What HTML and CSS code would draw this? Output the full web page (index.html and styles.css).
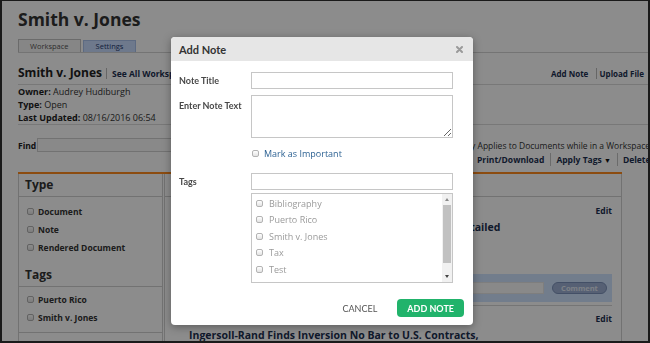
FILE: index.html
```html
<!DOCTYPE html>
<html lang="en">
<head>
  <meta charset="UTF-8">
  <title>Smith v. Jones - Workspace</title>
  <link rel="stylesheet" href="styles.css">
</head>
<body>

  <div class="page">
    <h1 class="case-title">Smith v. Jones</h1>

    <div class="tabs">
      <span class="tab active">Workspace</span>
      <span class="tab settings">Settings</span>
    </div>

    <div class="ws-head">
      <div class="ws-name">
        <h2>Smith v. Jones</h2>
        <a class="ws-link">See All Workspaces</a>
      </div>
      <div class="ws-actions">
        <a>Add Note</a>
        <a>Upload File</a>
      </div>
    </div>

    <div class="meta">
      <div><b>Owner:</b> Audrey Hudiburgh</div>
      <div><b>Type:</b> Open</div>
      <div><b>Last Updated:</b> 08/16/2016 06:54</div>
    </div>

    <div class="find-row">
      <label>Find</label>
      <input type="text" class="find">
      <span class="find-note">Only Applies to Documents while in a Workspace</span>
    </div>

    <div class="toolbar">
      <a>Print/Download</a>
      <a>Apply Tags <span class="caret">&#9660;</span></a>
      <a>Delete</a>
    </div>

    <div class="panels">
      <aside class="filters">
        <div class="filter-box">
          <div class="filter-head">Type</div>
          <div class="filter-list">
            <label><input type="checkbox"> Document</label>
            <label><input type="checkbox"> Note</label>
            <label><input type="checkbox"> Rendered Document</label>
          </div>
          <div class="filter-head">Tags</div>
          <div class="filter-list last">
            <label><input type="checkbox"> Puerto Rico</label>
            <label><input type="checkbox"> Smith v. Jones</label>
          </div>
        </div>
      </aside>

      <main class="docs">
        <div class="docs-head"></div>

        <div class="doc">
          <div class="doc-edit"><a>Edit</a></div>
          <div class="doc-title">Treasury Anti-Inversion Regulations Explained and Detailed</div>
          <div class="comment-bar">
            <input type="text" class="comment-input">
            <button class="comment-btn">Comment</button>
          </div>
        </div>

        <div class="doc">
          <div class="doc-edit"><a>Edit</a></div>
          <div class="doc-title">Ingersoll-Rand Finds Inversion No Bar to U.S. Contracts, Agency Says</div>
        </div>
      </main>
    </div>
  </div>

  <div class="overlay"></div>

  <div class="modal">
    <div class="modal-head">
      <h3>Add Note</h3>
      <svg class="close" width="7" height="7" viewBox="0 0 7 7">
        <path d="M1 1L6 6M6 1L1 6" stroke="#9a9a9a" stroke-width="2" stroke-linecap="round"/>
      </svg>
    </div>

    <div class="modal-body">
      <div class="row row-title">
        <label>Note Title</label>
        <input type="text" class="field">
      </div>
      <div class="row row-text">
        <label>Enter Note Text</label>
        <textarea class="field area"></textarea>
      </div>
      <div class="row row-check">
        <label></label>
        <div class="important">
          <input type="checkbox" class="box">
          <span>Mark as Important</span>
        </div>
      </div>
      <div class="row row-tags">
        <label>Tags</label>
        <input type="text" class="field">
      </div>
      <div class="row row-list">
        <label></label>
        <div class="tag-list">
          <div class="tag-items">
            <div class="tag"><input type="checkbox" class="box"> Bibliography</div>
            <div class="tag"><input type="checkbox" class="box"> Puerto Rico</div>
            <div class="tag"><input type="checkbox" class="box"> Smith v. Jones</div>
            <div class="tag"><input type="checkbox" class="box"> Tax</div>
            <div class="tag"><input type="checkbox" class="box"> Test</div>
            <div class="tag"><input type="checkbox" class="box"> Transfer Pricing</div>
          </div>
          <div class="scrollbar">
            <div class="sb-up"></div>
            <div class="sb-thumb"></div>
            <div class="sb-space"></div>
            <div class="sb-down"></div>
          </div>
        </div>
      </div>
    </div>

    <div class="modal-foot">
      <a class="cancel">CANCEL</a>
      <button class="add-note">ADD NOTE</button>
    </div>
  </div>

</body>
</html>
```

FILE: styles.css
```css
* { box-sizing: border-box; }
html, body {
  margin: 0;
  height: 100%;
  overflow: hidden;
}
body {
  font-family: "Open Sans", sans-serif;
  background-color: #fff;
  color: #222;
}
a { color: #1d3050; }

/* page behind the dialog */
.page {
  width: 650px;
  padding: 8px 0 0 18px;
}
.case-title {
  margin: 0;
  font-size: 17.5px;
  line-height: 22px;
  font-weight: 700;
  color: #333;
}
.tabs {
  display: flex;
  align-items: flex-end;
  gap: 2px;
  margin-top: 9px;
  border-bottom: 1px solid #d4d4d4;
}
.tab {
  height: 13px;
  padding: 0 11px;
  font-size: 7.5px;
  line-height: 12px;
  color: #555;
  background-color: #f4f4f4;
  border: 1px solid #c4c4c4;
  border-bottom: none;
}
.tab.settings {
  height: 12px;
  padding: 0 12px;
  line-height: 11px;
  color: #1f3a6e;
  background-color: #c9dcff;
  border-color: #a9c1ec;
}
.ws-head {
  display: flex;
  justify-content: space-between;
  align-items: baseline;
  height: 32px;
  padding: 7px 6px 0 0;
  border-bottom: 1px solid #dadada;
}
.ws-name {
  display: flex;
  align-items: baseline;
}
.ws-name h2 {
  margin: 0;
  font-size: 12px;
  line-height: 16px;
  font-weight: 700;
}
.ws-link {
  margin-left: 4px;
  padding-left: 5px;
  border-left: 1px solid #bbb;
  font-size: 8.5px;
  font-weight: 700;
}
.ws-actions a {
  font-size: 8px;
  font-weight: 700;
  padding: 0 3px;
}
.ws-actions a + a {
  border-left: 1px solid #bbb;
  padding-right: 0;
}
.meta {
  font-size: 9px;
  line-height: 13px;
  color: #333;
  border-bottom: 1px solid #dadada;
}
.meta b { color: #222; }
.find-row {
  display: flex;
  align-items: center;
  padding-top: 13px;
  white-space: nowrap;
}
.find-row label {
  width: 20px;
  font-size: 8.5px;
  font-weight: 700;
}
.find {
  width: 422px;
  height: 14px;
  margin-right: 10px;
  border: 1px solid #cfcfcf;
  background-color: #fafafa;
}
.find-note {
  font-size: 8.5px;
  color: #333;
}
.toolbar {
  display: flex;
  height: 13px;
  margin-top: 1px;
  padding-left: 459px;
  white-space: nowrap;
  font-size: 8.5px;
  line-height: 13px;
  font-weight: 700;
}
.toolbar a + a {
  margin-left: 6px;
  padding-left: 5px;
  border-left: 1px solid #c4c4c4;
}
.caret {
  font-size: 7px;
  color: #111;
}

.panels {
  display: flex;
  width: 604px;
  height: 220px;
  margin-top: 6px;
  border-top: 2px solid #ff8a1e;
}
.filters {
  width: 145px;
  border-left: 1px solid #cfcfcf;
  border-right: 1px solid #cfcfcf;
}
.filter-box { border-bottom: 1px solid #cfcfcf; }
.filter-head {
  height: 23px;
  padding-left: 6px;
  font-size: 12px;
  line-height: 22px;
  font-weight: 700;
  color: #333;
  border-bottom: 1px solid #cfcfcf;
}
.filter-list { padding: 5px 0 8px 8px; }
.filter-list.last { padding: 3px 0 6px 8px; }
.filter-list label {
  display: flex;
  align-items: center;
  gap: 4px;
  height: 18px;
  font-size: 8.5px;
  font-weight: 700;
  color: #333;
}
.filter-list input,
.box {
  appearance: none;
  width: 7px;
  height: 7px;
  margin: 0;
  border: 1px solid #b3b3b3;
  border-radius: 2px;
  background: linear-gradient(#fff, #e3e3e3);
}
.docs {
  flex: 1;
  margin-left: 1px;
  border-left: 1px solid #cfcfcf;
  border-right: 1px solid #cfcfcf;
}
.docs-head {
  height: 23px;
  border-bottom: 1px solid #cfcfcf;
}
.doc {
  margin: 0 9px 0 24px;
  border-bottom: 1px solid #d6d6d6;
}
.doc-edit {
  margin-top: 7px;
  text-align: right;
  font-size: 8.5px;
  line-height: 14px;
  font-weight: 700;
}
.doc + .doc .doc-edit { margin-top: 6px; }
.doc-title {
  max-width: 312px;
  margin-top: 2px;
  font-size: 10.5px;
  line-height: 14px;
  font-weight: 700;
  color: #1d3050;
}
.comment-bar {
  display: flex;
  gap: 8px;
  margin: 40px 0 3px -14px;
  padding: 8px 5px;
  background-color: #d0e3ff;
}
.comment-input {
  flex: 1;
  height: 12px;
  border: 1px solid #e6e6e6;
  background-color: #fafafa;
}
.comment-btn {
  width: 55px;
  height: 12px;
  padding: 0;
  border: 1px solid #7b91ba;
  border-radius: 7px;
  background-color: #9db0d3;
  color: #e4eaf5;
  font-family: "Open Sans", sans-serif;
  font-size: 7.5px;
  font-weight: 700;
}

/* dim layer */
.overlay {
  position: fixed;
  inset: 0;
  background-color: rgba(0, 0, 0, 0.45);
  border-style: solid;
  border-color: #1a1a1a;
  border-width: 1px 2px 2px 2px;
}

/* dialog */
.modal {
  position: absolute;
  left: 171px;
  top: 37px;
  width: 302px;
  background-color: #fff;
  border-radius: 4px;
  box-shadow: 0 2px 8px rgba(0, 0, 0, 0.35);
  font-family: Lato, sans-serif;
}
.modal-head {
  display: flex;
  justify-content: space-between;
  align-items: center;
  height: 24px;
  padding: 0 10px 0 8px;
  background-color: #e6e6e6;
  border-radius: 4px 4px 0 0;
}
.modal-head h3 {
  margin: 0;
  font-size: 11px;
  font-weight: 700;
  color: #333;
}
.modal-body { padding: 11px 20px 0 8px; }
.row { display: flex; }
.row label {
  width: 72px;
  flex: none;
  font-size: 9px;
  font-weight: 700;
  color: #484848;
}
.row-title label,
.row-tags label { align-self: center; }
.row-text { margin-top: 6px; }
.row-text label { padding-top: 5px; }
.row-check { margin-top: 8px; }
.row-tags { margin-top: 13px; }
.row-list { margin-top: 3px; }
.field {
  width: 202px;
  height: 17px;
  border: 1px solid #c6c6c6;
  font-family: Lato, sans-serif;
}
.field.area {
  height: 43px;
  display: block;
}
.important {
  display: flex;
  align-items: center;
  gap: 5px;
  height: 14px;
  padding-left: 1px;
  font-family: "Open Sans", sans-serif;
  font-size: 9px;
  color: #2d6293;
}
.tag-list {
  display: flex;
  width: 202px;
  height: 90px;
  border: 1px solid #c6c6c6;
}
.tag-items {
  flex: 1;
  overflow: hidden;
  padding: 1px 0 0 4px;
}
.tag {
  display: flex;
  align-items: center;
  gap: 6px;
  height: 16.5px;
  font-family: "Open Sans", sans-serif;
  font-size: 9px;
  color: #9a9a9a;
}
.scrollbar {
  display: flex;
  flex-direction: column;
  width: 10px;
  background-color: #f1f1f1;
}
.sb-up, .sb-down {
  height: 11px;
  display: flex;
  justify-content: center;
  align-items: center;
}
.sb-up::after {
  content: "";
  border: 2.5px solid transparent;
  border-bottom: 3px solid #8a8a8a;
  border-top: none;
}
.sb-down::after {
  content: "";
  border: 2.5px solid transparent;
  border-top: 3px solid #444;
  border-bottom: none;
}
.sb-thumb {
  height: 58px;
  margin: 0 1px;
  background-color: #c1c1c1;
}
.sb-space { flex: 1; }
.modal-foot {
  display: flex;
  justify-content: flex-end;
  align-items: center;
  gap: 20px;
  padding: 16px 9px 8px 0;
}
.cancel {
  font-size: 9px;
  color: #555;
}
.add-note {
  height: 18px;
  padding: 0 10px;
  border: none;
  border-radius: 4px;
  background-color: #21b36b;
  color: #fff;
  font-family: Lato, sans-serif;
  font-size: 9px;
  font-weight: 700;
}
```
